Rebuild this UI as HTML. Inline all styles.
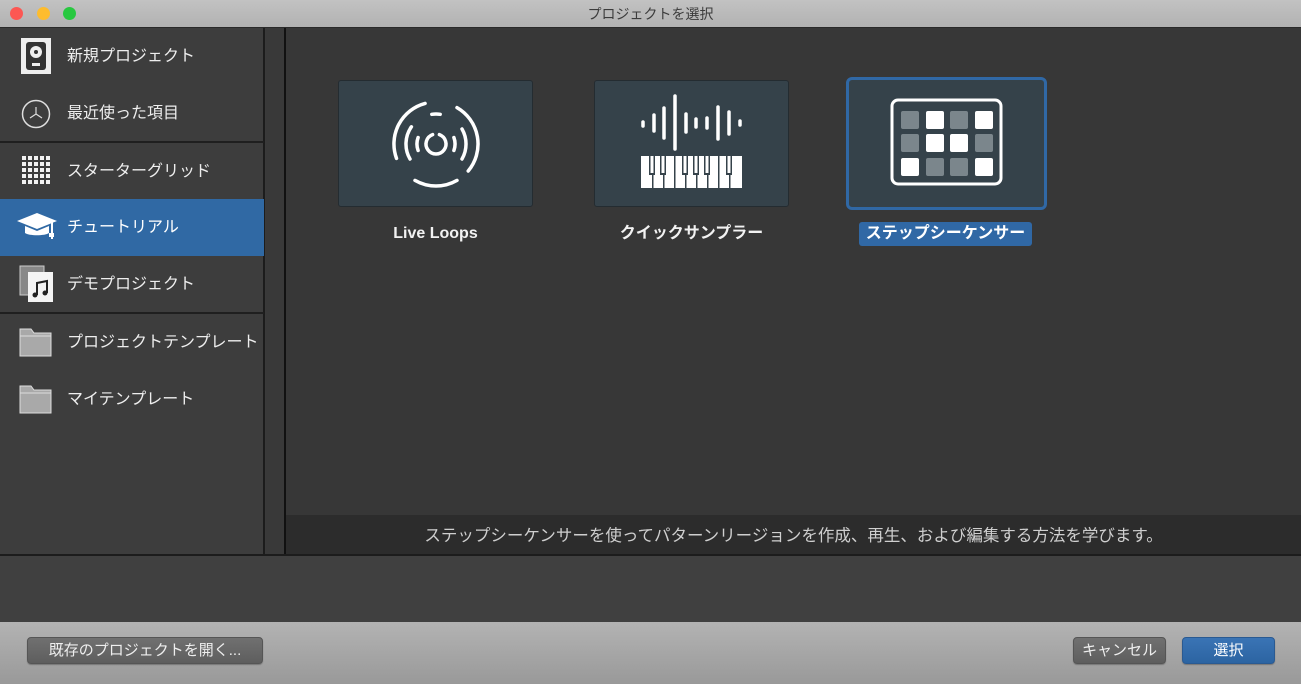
<!DOCTYPE html>
<html><head><meta charset="utf-8"><style>
*{margin:0;padding:0;box-sizing:border-box}
body{width:1301px;height:684px;overflow:hidden;background:#3a3a3a;font-family:"Liberation Sans","Noto Sans CJK JP",sans-serif;position:relative}
.title{position:absolute;left:0;top:0;width:1301px;height:28px;background:linear-gradient(#c2c2c2,#b2b2b2);border-bottom:1px solid #2a2a2a;text-align:center;font-size:14px;line-height:28px;color:#3c3c3c}
.dot{position:absolute;top:7px;width:13px;height:13px;border-radius:50%}
.side{position:absolute;left:0;top:28px;width:265px;height:527px;background:#3d3d3d;border-right:2px solid #1c1c1c}
.strip{position:absolute;left:266px;top:28px;width:20px;height:527px;background:#393939;border-right:2px solid #111}
.main{position:absolute;left:286px;top:28px;width:1015px;height:487px;background:#373737}
.desc{position:absolute;left:286px;top:515px;width:1015px;height:39px;background:#2c2c2c;color:#cfcfcf;font-size:16.5px;text-align:center;line-height:42px}
.hline{position:absolute;left:0;top:554px;width:1301px;height:2px;background:#1c1c1c}
.lower{position:absolute;left:0;top:556px;width:1301px;height:66px;background:#404040}
.foot{position:absolute;left:0;top:622px;width:1301px;height:62px;background:linear-gradient(#b3b3b3,#999)}
.row{position:absolute;left:0;width:264px;height:57px;color:#eee;font-size:16px;line-height:57px;padding-left:67px}
.sep{position:absolute;left:0;width:264px;height:2px;background:#1f1f1f}
.ic{position:absolute;left:18px;top:12px}
.tile{position:absolute;top:80px;width:195px;height:127px;background:#35424a;border-radius:3px;border:1px solid #242c31}
.lbl{position:absolute;top:224px;height:20px;line-height:20px;color:#f2f2f2;font-size:16px;font-weight:bold;text-align:center}
.btn{position:absolute;top:637px;height:27px;border-radius:4px;background:linear-gradient(#707070,#5e5e5e);border:1px solid #555;color:#eee;font-size:15px;line-height:25px;text-align:center;box-shadow:0 1px 1px #777}
</style></head><body>
<div class="title">プロジェクトを選択
<div class="dot" style="left:10px;background:#fc5753"></div>
<div class="dot" style="left:37px;background:#fdbc2e"></div>
<div class="dot" style="left:63px;background:#28c840"></div>
</div>
<div class="side">
 <div class="row" style="top:0">
  <svg class="ic" width="34" height="36" viewBox="0 0 34 36" style="left:21px;top:10px"><rect x="0" y="0" width="30" height="36" fill="#eee"/><rect x="5" y="4" width="20" height="28" rx="3" fill="#333"/><circle cx="15" cy="14" r="6" fill="#eee"/><circle cx="15" cy="14" r="2" fill="#333"/><rect x="11" y="25" width="8" height="3" fill="#eee"/></svg>新規プロジェクト</div>
 <div class="row" style="top:57px">
  <svg class="ic" width="30" height="30" viewBox="0 0 30 30" style="left:21px;top:14px"><circle cx="15" cy="15" r="13.5" fill="none" stroke="#ddd" stroke-width="1.5"/><path d="M15 15V8M15 15L9 19M15 15L21 19" stroke="#ddd" stroke-width="1.2"/></svg>最近使った項目</div>
 <div class="sep" style="top:113px"></div>
 <div class="row" style="top:115px">
  <svg class="ic" width="30" height="30" viewBox="0 0 30 30" style="left:22px;top:13px" fill="#f2f2f2"><g id="r"><rect x="0" y="0" width="4" height="4"/><rect x="6" y="0" width="4" height="4"/><rect x="12" y="0" width="4" height="4"/><rect x="18" y="0" width="4" height="4"/><rect x="24" y="0" width="4" height="4"/></g><use href="#r" y="6"/><use href="#r" y="12"/><use href="#r" y="18"/><use href="#r" y="24"/></svg>スターターグリッド</div>
 <div class="row" style="top:171px;background:#3069a4;color:#fff">
  <svg class="ic" width="42" height="30" viewBox="0 0 42 30" style="left:16px;top:14px" fill="#fff"><path d="M21 0L41 8L21 16L1 8Z"/><path d="M9 13v7c4 3 20 3 24 0v-7l-12 5z"/><rect x="35" y="9" width="2" height="17"/><rect x="33" y="20" width="5" height="4"/></svg>チュートリアル</div>
 <div class="row" style="top:228px">
  <svg class="ic" width="36" height="38" viewBox="0 0 36 38" style="left:19px;top:9px"><rect x="1" y="1" width="24" height="29" fill="#888" stroke="#ccc"/><rect x="9" y="7" width="25" height="30" fill="#f4f4f4"/><path d="M18 30V18l10-2v12" stroke="#222" stroke-width="2" fill="none"/><circle cx="16" cy="30" r="2.5" fill="#222"/><circle cx="26" cy="28" r="2.5" fill="#222"/></svg>デモプロジェクト</div>
 <div class="sep" style="top:284px"></div>
 <div class="row" style="top:286px">
  <svg class="ic" width="34" height="30" viewBox="0 0 34 30" style="left:19px;top:13px"><path d="M1 2h11l3 4h17v23H1z" fill="#a9a9a9" stroke="#ddd"/><path d="M1 9h31" stroke="#ddd"/></svg>プロジェクトテンプレート</div>
 <div class="row" style="top:343px">
  <svg class="ic" width="34" height="30" viewBox="0 0 34 30" style="left:19px;top:13px"><path d="M1 2h11l3 4h17v23H1z" fill="#a9a9a9" stroke="#ddd"/><path d="M1 9h31" stroke="#ddd"/></svg>マイテンプレート</div>
</div>
<div class="strip"></div>
<div class="main"></div>
<div class="tile" style="left:338px">
 <svg width="195" height="127" viewBox="0 0 195 127" fill="none" stroke="#fff" stroke-width="3.5" stroke-linecap="round">
  <path d="M86.1 22.4A42 42 0 0 0 57.5 77.4"/>
  <path d="M118 26.6A42 42 0 0 1 129.2 90"/>
  <path d="M118 99.4A42 42 0 0 1 76 99.4"/>
  <path d="M92.8 33.3A30 30 0 0 1 101.2 33.3"/>
  <path d="M71 78A30 30 0 0 1 72.4 45.8"/>
  <path d="M123 48A30 30 0 0 1 123 78"/>
  <path d="M79.1 69.5A19 19 0 0 1 79.1 56.5"/>
  <path d="M114.9 56.5A19 19 0 0 1 114.9 69.5"/>
  <path d="M100.4 53.6A10 10 0 1 1 93.6 53.6"/>
 </svg>
</div>
<div class="tile" style="left:594px">
 <svg width="195" height="127" viewBox="0 0 195 127" stroke="#fff" stroke-width="3.5" stroke-linecap="round"><path d="M48 41v4M59 34v16M69 27v30M80 15v53M91 33v18M101 38v8M112 37v10M123 26v32M134 31v22M145 40v4"/>
 <g fill="#fff" stroke="none"><rect x="46" y="75" width="101" height="32"/></g>
 <g fill="#35424a" stroke="none"><rect x="57" y="75" width="1.5" height="32"/><rect x="68" y="75" width="1.5" height="32"/><rect x="79" y="75" width="1.5" height="32"/><rect x="90" y="75" width="1.5" height="32"/><rect x="101" y="75" width="1.5" height="32"/><rect x="112" y="75" width="1.5" height="32"/><rect x="123" y="75" width="1.5" height="32"/><rect x="134" y="75" width="1.5" height="32"/>
 <rect x="54" y="75" width="6" height="19"/><rect x="65" y="75" width="6" height="19"/><rect x="87" y="75" width="6" height="19"/><rect x="98" y="75" width="6" height="19"/><rect x="109" y="75" width="6" height="19"/><rect x="131" y="75" width="6" height="19"/></g>
 <g fill="#fff" stroke="none"><rect x="55.5" y="75" width="3" height="17"/><rect x="66.5" y="75" width="3" height="17"/><rect x="88.5" y="75" width="3" height="17"/><rect x="99.5" y="75" width="3" height="17"/><rect x="110.5" y="75" width="3" height="17"/><rect x="132.5" y="75" width="3" height="17"/></g>
 </svg>
</div>
<div class="tile" style="left:846px;top:77px;width:201px;height:133px;border:3px solid #3068a5;border-radius:6px">
 <svg width="195" height="127" viewBox="0 0 195 127"><rect x="43" y="20" width="109" height="84" rx="6" fill="none" stroke="#fff" stroke-width="3"/><g fill="#7b868c"><rect x="52" y="31" width="18" height="18" rx="2"/><rect x="101" y="31" width="18" height="18" rx="2"/><rect x="52" y="54" width="18" height="18" rx="2"/><rect x="126" y="54" width="18" height="18" rx="2"/><rect x="77" y="78" width="18" height="18" rx="2"/><rect x="101" y="78" width="18" height="18" rx="2"/></g><g fill="#fff"><rect x="77" y="31" width="18" height="18" rx="2"/><rect x="126" y="31" width="18" height="18" rx="2"/><rect x="77" y="54" width="18" height="18" rx="2"/><rect x="101" y="54" width="18" height="18" rx="2"/><rect x="52" y="78" width="18" height="18" rx="2"/><rect x="126" y="78" width="18" height="18" rx="2"/></g></svg>
</div>
<div class="lbl" style="left:338px;width:195px">Live Loops</div>
<div class="lbl" style="left:594px;width:195px">クイックサンプラー</div>
<div class="lbl" style="left:859px;width:173px;top:222px;height:24px;line-height:24px;background:#3068a5;border-radius:3px;color:#fff">ステップシーケンサー</div>
<div class="desc">ステップシーケンサーを使ってパターンリージョンを作成、再生、および編集する方法を学びます。</div>
<div class="hline"></div>
<div class="lower"></div>
<div class="foot"></div>
<div class="btn" style="left:27px;width:236px">既存のプロジェクトを開く...</div>
<div class="btn" style="left:1073px;width:93px">キャンセル</div>
<div class="btn" style="left:1182px;width:93px;background:linear-gradient(#3a74b5,#2c64a2);border-color:#2a5a92;color:#fff">選択</div>
</body></html>
